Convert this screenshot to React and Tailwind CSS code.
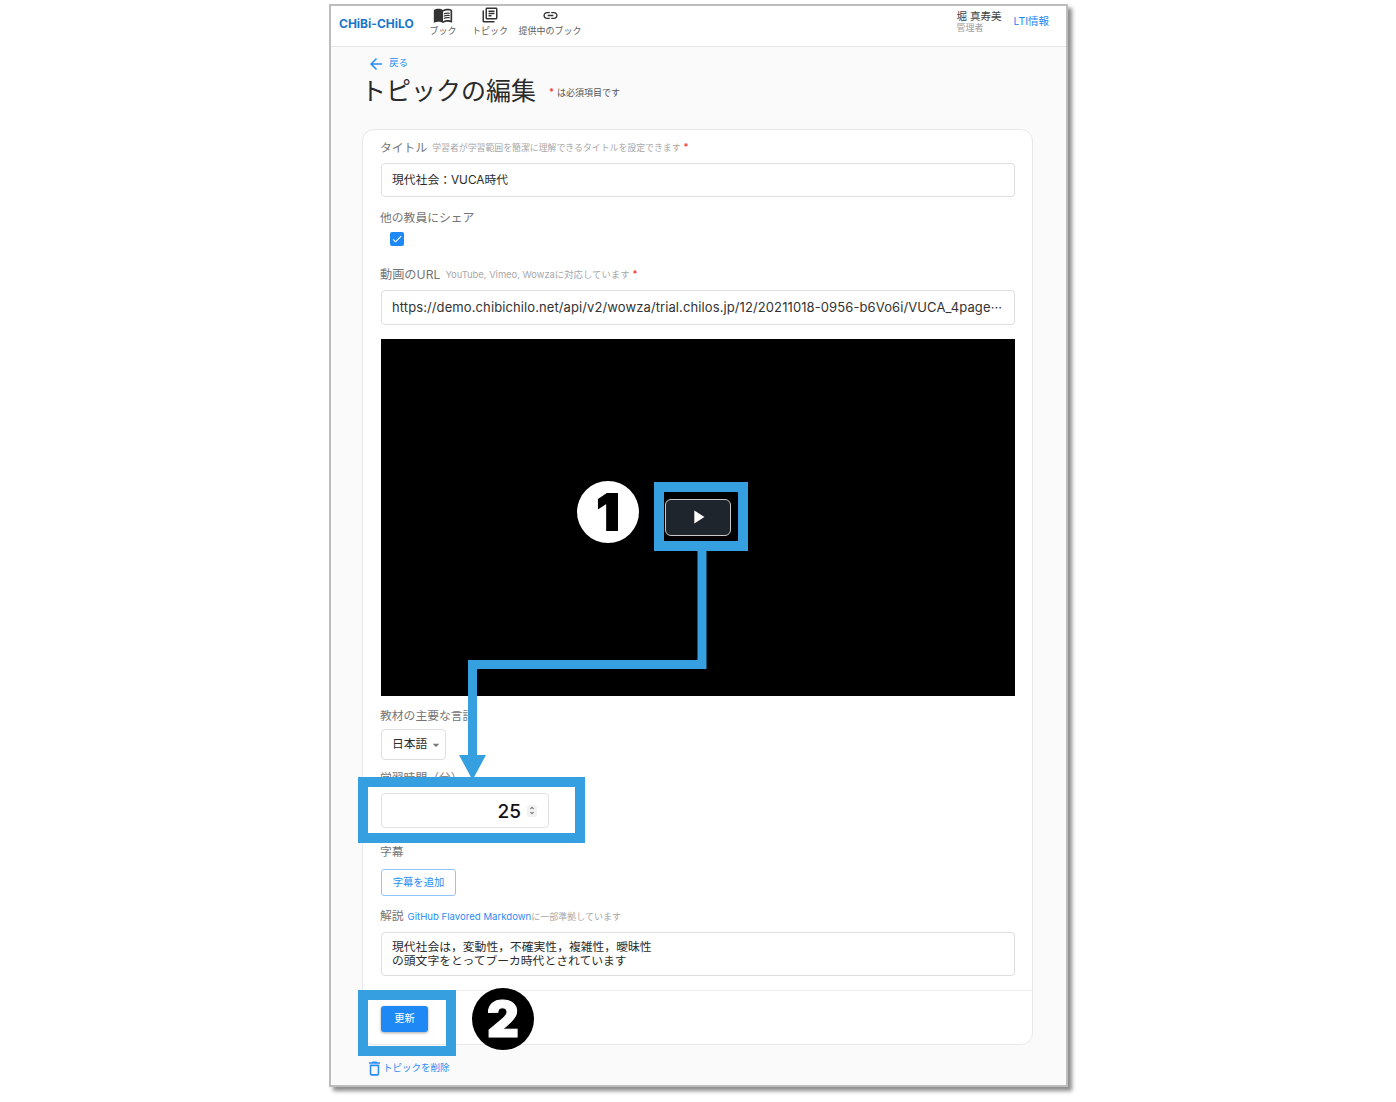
import React from "react";
import { MdMenuBook, MdOutlineLibraryBooks, MdLink, MdArrowBack, MdOutlineDelete, MdCheck, MdPlayArrow, MdArrowDropDown, MdUnfoldMore } from "react-icons/md";

const FONT = "font-['Inter','Noto_Sans_CJK_JP',sans-serif]";

function Label({ children, help, req, big }) {
  return (
    <div className={`-ml-[1px] flex h-[16px] items-center leading-[16px] text-[#757575] ${big ? "text-[12.2px]" : "text-[11.8px]"}`}>
      <span>{children}</span>
      {help && <span className={`ml-[5px] text-[#a8a8a8] ${big ? "text-[9.4px]" : "text-[8.9px]"}`}>{help}</span>}
      {req && <span className="ml-[3px] -mt-[3px] text-[9px] font-bold text-[#f44336]">*</span>}
    </div>
  );
}

function NavItem({ icon, label, className }) {
  return (
    <div className={`flex flex-col items-center text-[9px] leading-[12px] text-[#5f5f5f] ${className}`}>
      <div className="flex h-[20px] items-center text-[#333]">{icon}</div>
      <span>{label}</span>
    </div>
  );
}

export default function App() {
  return (
    <div className={`relative h-[1102px] w-[1396px] overflow-hidden bg-white ${FONT}`}>
      <div className="ml-[329px] mt-[4px] h-[1083px] w-[739px] overflow-hidden border-2 border-[#bdbdbd] bg-[#fafafa] shadow-[4px_4px_4px_rgba(0,0,0,0.45)]">
        <header className="flex h-[41px] items-center border-b border-[#e8e8e8] bg-white pl-[8px] pr-[17px]">
          <span className="w-[79px] -mt-[5px] text-[12px] font-bold text-[#1976c9]">CHiBi-CHiLO</span>
          <NavItem icon={<MdMenuBook size={20} />} label="ブック" className="w-[50px] -mt-[10px]" />
          <NavItem icon={<MdOutlineLibraryBooks size={18} />} label="トピック" className="ml-[-2px] w-[48px] -mt-[10px]" />
          <NavItem icon={<MdLink size={17} />} label="提供中のブック" className="ml-[4px] w-[64px] -mt-[10px]" />
          <div className="ml-auto mr-[12px] flex flex-col -mt-[9px]">
            <span className="text-[10.5px] leading-[11px] text-[#444]">堀 真寿美</span>
            <span className="mt-[1px] text-[9px] leading-[10px] text-[#9e9e9e]">管理者</span>
          </div>
          <span className="-mt-[9px] text-[10.5px] text-[#1e88f5]">LTI情報</span>
        </header>

        <main className="pl-[31px] pr-[33px]">
          <a className="mt-[8px] ml-[5px] flex h-[17px] items-center text-[9.5px] text-[#2a8cf5]">
            <MdArrowBack size={18} />
            <span className="ml-[4px]">戻る</span>
          </a>
          <div className="-ml-[1px] flex h-[38px] items-center">
            <h1 className="text-[25px] font-normal leading-[38px] text-[#2a2a2a]">トピックの編集</h1>
            <span className="ml-[13px] mt-[4px] flex items-center text-[9px] text-[#555]">
              <span className="mr-[3px] -mt-[3px] font-bold text-[#f44336]">*</span>は必須項目です
            </span>
          </div>

          <section className="mt-[19px] h-[916px] rounded-[12px] border border-[#e8e8e8] bg-white">
            <div className="pl-[18px] pr-[17px] pt-[10px]">
              <Label help="学習者が学習範囲を簡潔に理解できるタイトルを設定できます" req>タイトル</Label>
              <div className="mt-[7px] flex h-[34px] items-center rounded-[4px] border border-[#dedede] px-[10px] pt-[1px] text-[11.8px] text-[#2b2b2b]">現代社会：VUCA時代</div>

              <div className="mt-[13px]"><Label>他の教員にシェア</Label></div>
              <div className="ml-[9px] mt-[6px] flex h-[14px] w-[14px] items-center justify-center rounded-[2px] bg-[#1e88f5] text-white"><MdCheck size={12} /></div>

              <div className="mt-[21px]"><Label big help="YouTube, Vimeo, Wowzaに対応しています" req>動画のURL</Label></div>
              <div className="mt-[7px] flex h-[35px] items-center rounded-[4px] border border-[#dedede] px-[10px] text-[13px] tracking-[0.1px] text-[#333]">
                <span className="whitespace-nowrap">https://demo.chibichilo.net/api/v2/wowza/trial.chilos.jp/12/20211018-0956-b6Vo6i/VUCA_4page···</span>
              </div>

              <div className="mt-[14px] flex h-[357px] items-center justify-center bg-black">
                <div className="-mt-[1px] flex h-[37px] w-[66px] items-center justify-center rounded-[6px] border border-[#c8c8c8] bg-[#1f252d] text-white">
                  <MdPlayArrow size={22} />
                </div>
              </div>

              <div className="mt-[12px]"><Label>教材の主要な言語</Label></div>
              <div className="mt-[5px] flex h-[31px] w-[65px] items-center rounded-[4px] border border-[#dedede] pl-[10px] text-[11.8px] text-[#2b2b2b]">
                日本語<MdArrowDropDown size={16} className="ml-[1px] text-[#777]" />
              </div>

              <div className="mt-[10px]"><Label>学習時間（分）</Label></div>
              <div className="mt-[7px] flex h-[35px] w-[168px] items-center justify-end rounded-[4px] border border-[#e2e2e2] pr-[11px] text-[19px] font-medium text-[#111]">
                <span className="pt-[3px]">25</span>
                <span className="ml-[6px] flex h-[12px] w-[10px] items-center justify-center rounded-[3px] bg-[#f1f1f1] text-[#555]"><MdUnfoldMore size={11} /></span>
              </div>

              <div className="mt-[16px]"><Label>字幕</Label></div>
              <div className="mt-[9px] flex h-[27px] w-[75px] items-center justify-center rounded-[3px] border border-[#90c4fa] text-[10.3px] text-[#2a8cf5]">字幕を追加</div>

              <div className="-ml-[1px] mt-[13px] flex h-[16px] items-center text-[11.8px] text-[#757575]">
                解説
                <span className="ml-[4px] text-[9.6px] text-[#2a8cf5]">GitHub Flavored Markdown</span>
                <span className="text-[9px] text-[#a8a8a8]">に一部準拠しています</span>
              </div>
              <div className="mt-[7px] h-[44px] rounded-[4px] border border-[#dedede] px-[10px] py-[7px] text-[11.8px] leading-[14px] text-[#2b2b2b]">
                現代社会は，変動性，不確実性，複雑性，曖昧性<br />の頭文字をとってブーカ時代とされています
              </div>
            </div>
            <div className="mt-[14px] border-t border-[#eeeeee] px-[18px] pt-[15px]">
              <div className="flex h-[26px] w-[47px] items-center justify-center rounded-[3px] bg-[#1e88f5] text-[10.3px] text-white shadow-[0_1px_3px_rgba(0,0,0,0.35)]">更新</div>
            </div>
          </section>

          <a className="mt-[13px] ml-[3px] flex h-[20px] items-center text-[9.5px] text-[#2a8cf5]">
            <MdOutlineDelete size={19} />
            <span className="-ml-[1px]">トピックを削除</span>
          </a>
        </main>
      </div>

      {/* annotations */}
      <div className="absolute left-[654px] top-[482px] h-[69px] w-[94px] border-[10px] border-[#369fdf]" />
      <div className="absolute left-[358px] top-[777px] h-[66px] w-[227px] border-[10px] border-[#369fdf]" />
      <div className="absolute left-[358px] top-[990px] h-[66px] w-[98px] border-[10px] border-[#369fdf]" />
      <svg className="absolute left-[450px] top-[545px]" width="270" height="240" viewBox="450 545 270 240">
        <path d="M702 551V664.5H472.5V756" fill="none" stroke="#369fdf" strokeWidth="9" />
        <path d="M459 755H486L472.5 780Z" fill="#369fdf" />
      </svg>
      <div className="absolute left-[577px] top-[481px] flex h-[62px] w-[62px] items-center justify-center rounded-full bg-white text-[50px] font-black leading-none text-black [-webkit-text-stroke:2px_black]">1</div>
      <div className="absolute left-[472px] top-[988px] flex h-[62px] w-[62px] items-center justify-center rounded-full bg-black text-[50px] font-black leading-none text-white [-webkit-text-stroke:1px_white]">2</div>
    </div>
  );
}
